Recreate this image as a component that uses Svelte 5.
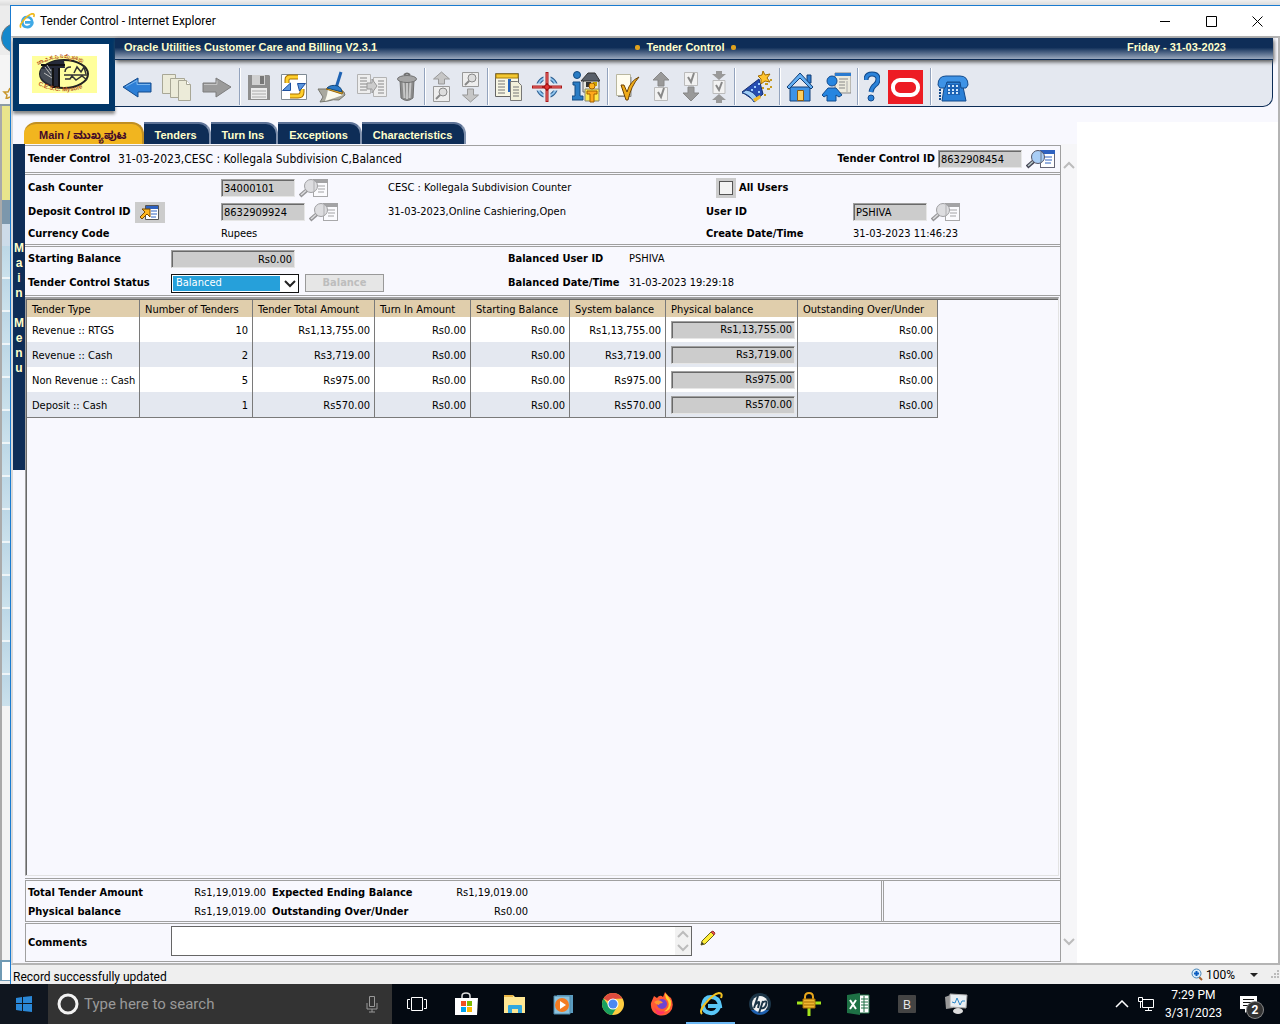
<script>
  const toolbar = [
    { items: [["back", "Back", 30], ["history", "History", 30], ["forward", "Forward", 30]] },
    { items: [["save", "Save", 24], ["refresh", "Refresh", 26], ["clear", "Clear", 30], ["duplicate", "Duplicate", 30], ["delete", "Delete", 20]] },
    { items: [["prev", "Previous item", 19], ["next", "Next item", 19]] },
    { items: [["account", "Account information", 27], ["target", "Go to", 30], ["premise", "Premise information", 28]] },
    { items: [["todo", "To do", 26], ["todoprev", "Previous to do", 20], ["todonext", "Next to do", 20], ["todoboth", "Current to do", 16]] },
    { tight: true, items: [["wizard", "Scripts", 32]] },
    { tight: true, items: [["home", "Home", 28], ["user", "My preferences", 29]] },
    { tight: true, items: [["help", "Help", 16], ["oracle", "About", 36]] },
    { tight: true, items: [["phone", "Call", 32]] }
  ];

  const tabs = ["Main / ಮುಖ್ಯಪುಟ", "Tenders", "Turn Ins", "Exceptions", "Characteristics"];
  let activetab = tabs[0];

  const columns = [
    { name: "Tender Type", width: 113 },
    { name: "Number of Tenders", width: 113 },
    { name: "Tender Total Amount", width: 122 },
    { name: "Turn In Amount", width: 96 },
    { name: "Starting Balance", width: 99 },
    { name: "System balance", width: 96 },
    { name: "Physical balance", width: 132 },
    { name: "Outstanding Over/Under", width: 140 }
  ];

  const tenders = [
    { type: "Revenue :: RTGS", count: 10, total: "Rs1,13,755.00" },
    { type: "Revenue :: Cash", count: 2, total: "Rs3,719.00" },
    { type: "Non Revenue :: Cash", count: 5, total: "Rs975.00" },
    { type: "Deposit :: Cash", count: 1, total: "Rs570.00" }
  ];

  const apps = ["taskview", "store", "folder", "media", "chrome", "firefox", "ie", "hp", "lock", "excel", "b", "monitor"];

  let status = "Balanced";
  let comments = "";
</script>

{#snippet lookup(off)}
  <svg class:off width="29" height="20" viewBox="0 0 29 20">
    <rect x="14.500" y="1.500" width="14" height="17" fill="#fff" stroke="#667" />
    <path d="M14 1h15v4H14z" fill="#2f62c0" />
    <path d="M19 8h7M19 11h7M19 14h6" stroke="#2f62c0" />
    <path d="M8 12l-7 6" stroke="#445" stroke-width="4" />
    <path d="M7 12.500l-5 4.500" stroke="#bcc" stroke-width="1.500" />
    <circle cx="12" cy="8" r="6.500" fill="#a9cdf5" stroke="#556" />
    <path d="M15 3v11" stroke="#678" />
  </svg>
{/snippet}

{#snippet icon(name, width)}
  <svg {width} height="34" viewBox="0 0 {width} 34">
    {#if name === "back"}
      <path d="M1 17L16 8v5h13v9H16v5z" fill="#2e7fd6" stroke="#124a8c" />
      <path d="M4 16.500l11-6v4h13" fill="none" stroke="#7bb6ee" />
    {:else if name === "forward"}
      <path d="M29 17L14 8v5H1v9h13v5z" fill="#9b9b9b" stroke="#7d7d7d" />
      <path d="M2 14.500h13v-4" fill="none" stroke="#c4c4c4" />
    {:else if name === "history"}
      <g fill="#ecebd9" stroke="#a8a796">
        <path d="M.5 4.500h13v19H.5z" /><path d="M8.500 8.500h14v19h-14z" />
        <path d="M16.500 10.500h8l4 4v16h-12z" /><path d="M24.500 10.500v4h4" fill="#fff" />
      </g>
    {:else if name === "save"}
      <path d="M1 5h21l1 1v24H1z" fill="#8e8e8e" />
      <path d="M5 5h13v10H5z" fill="#d0d0d0" /><path d="M13 6h4v8h-4z" fill="#777" />
      <path d="M4 18h16v11H4z" fill="#ececec" /><path d="M5 21h14M5 24h14M5 27h14" stroke="#aaa" />
    {:else if name === "refresh"}
      <path d="M.5 4.500h25v25H.5z" fill="#fff" stroke="#7e8a94" />
      <path d="M6 13V10q0-3 3-3h8" fill="none" stroke="#a87000" stroke-width="5" />
      <path d="M6 13V10q0-3 3-3h8" fill="none" stroke="#ffd02c" stroke-width="3" />
      <path d="M21 19v3q0 4-4 4H9" fill="none" stroke="#a87000" stroke-width="5" />
      <path d="M21 19v3q0 4-4 4H9" fill="none" stroke="#ffd02c" stroke-width="3" />
      <path d="M1.500 20.500l8-7.500v7.500zM16.500 13.500h8l-6 7.500z" fill="#5b97de" stroke="#1d4f9e" />
    {:else if name === "clear"}
      <path d="M24 2l-5 16" stroke="#1e63b4" stroke-width="3" />
      <path d="M1 19h9l17 3 1 3-6 5q-6-1-11 1l-8 1 3-5z" fill="#a9a99f" stroke="#77776e" />
      <path d="M11 19l15 6q-8 3-18 6l2-6z" fill="#fbfbef" />
      <path d="M9 19l16 5 1-3-14-4z" fill="#f3b32b" stroke="#9a6b11" />
      <path d="M10 18q4-4 11-2 4 2 4 6z" fill="#2b7ac9" stroke="#154b80" />
    {:else if name === "duplicate"}
      <path d="M.5 4.500h13v19H.5zM16.500 7.500h13v19h-13z" fill="#eee" stroke="#b3b3b3" />
      <path d="M3 8h7M3 11h7M3 14h7M3 17h7M3 20h7M21 11h6M21 14h6M21 17h6M21 20h6M21 23h6" stroke="#888" />
      <path d="M10 13h5V9l5 7-5 7v-4h-5z" fill="#ccc" stroke="#999" />
    {:else if name === "delete"}
      <path d="M3 10h14l-1 18q-6 5-12 0z" fill="#8c8c8c" stroke="#707070" />
      <path d="M6.500 12l1 16M10 12v17M13.500 12l-1 16" stroke="#c6c6c6" stroke-width="2" />
      <ellipse cx="10" cy="9" rx="9.500" ry="3.500" fill="#a5a5a5" stroke="#707070" />
      <path d="M7 5q3-3 6 0" fill="none" stroke="#707070" stroke-width="2" />
    {:else if name === "prev"}
      <path d="M9.500 2l8 7h-5v5h-6V9h-5z" fill="#c6c6c6" stroke="#999" />
      <path d="M1.500 16.500h16v15h-16z" fill="#eee" stroke="#999" />
      <circle cx="11" cy="22" r="4" fill="#ddd" stroke="#888" /><path d="M8 25l-4 4" stroke="#888" stroke-width="2" />
    {:else if name === "next"}
      <path d="M1.500 2.500h16v14h-16z" fill="#eee" stroke="#999" />
      <circle cx="11" cy="8" r="4" fill="#ddd" stroke="#888" /><path d="M8 11l-4 4" stroke="#888" stroke-width="2" />
      <path d="M9.500 32l8-7h-5v-6h-6v6h-5z" fill="#c6c6c6" stroke="#999" />
    {:else if name === "account"}
      <path d="M.5 3.500h23v23H.5z" fill="#f7f6e4" stroke="#666" />
      <path d="M1 4h22v4H1z" fill="#f3c832" stroke="#a97f0a" />
      <path d="M3 11h7M3 14h7M3 17h7M3 20h7M3 23h7" stroke="#777" />
      <path d="M13 9h3v13h-3z" fill="#2264c0" />
      <path d="M15.500 11.500h7l4 4v15h-11z" fill="#f2f0dc" stroke="#777" />
      <path d="M18 17h6M18 20h6M18 23h6M18 26h6" stroke="#777" />
    {:else if name === "target"}
      <circle cx="15" cy="17" r="9" fill="none" stroke="#2c5f92" stroke-width="4" />
      <circle cx="15" cy="17" r="9" fill="none" stroke="#8fc4ee" stroke-width="2" />
      <path d="M15 1v32M0 17h30" stroke="#e4e8f0" stroke-width="7" />
      <path d="M15 2v30M0 17h30" stroke="#a81818" stroke-width="3" />
      <path d="M15 3v10M15 21v10M1 17h9M20 17h9" stroke="#f57878" />
      <circle cx="15" cy="17" r="2.500" fill="#e63232" stroke="#911" />
    {:else if name === "premise"}
      <circle cx="5" cy="5" r="3.500" fill="#2a7cc4" stroke="#154b80" />
      <path d="M1 12h7v14h3v4H0v-4h3V15H1z" fill="#2a7cc4" stroke="#154b80" />
      <path d="M11 12v10h16V12l-4-4h-8z" fill="#e6e6de" stroke="#666" />
      <path d="M9 11l7-8h7l5 8z" fill="#59606a" stroke="#333" />
      <path d="M14 12h5v5h-5z" fill="#333" /><path d="M21 12h4v4h-4z" fill="#c9a400" />
      <path d="M13 19h14v12H13z" fill="#ffe94a" stroke="#887" />
      <circle cx="20" cy="16" r="3" fill="#ffb41f" stroke="#a06000" />
      <path d="M15 21h10v3h-3v8h-4v-8h-3z" fill="#ffa81c" stroke="#a06000" />
    {:else if name === "todo"}
      <path d="M1.500 4.500h14v21h-14z" fill="#fffdf0" stroke="#b9b7a0" />
      <path d="M3 26.500h13V7" fill="none" stroke="#888" />
      <path d="M6 15h3l3 7Q15 11 24 7 16 16 13 30H11z" fill="#f0ab17" stroke="#6c4306" />
    {:else if name === "todoprev"}
      <path d="M10 2l8 8h-5v6H7v-6H2z" fill="#999" stroke="#888" />
      <path d="M3.500 17.500h13v13h-13z" fill="#f2f2f2" stroke="#bbb" />
      <path d="M7 22l3 5 3-9" fill="none" stroke="#888" stroke-width="2" />
    {:else if name === "todonext"}
      <path d="M3.500 2.500h13v13h-13z" fill="#f2f2f2" stroke="#bbb" />
      <path d="M7 7l3 5 3-9" fill="none" stroke="#888" stroke-width="2" />
      <path d="M10 31l8-8h-5v-6H7v6H2z" fill="#999" stroke="#888" />
    {:else if name === "todoboth"}
      <path d="M5 1h6v3h4l-7 6-7-6h4zM5 33h6v-3h4l-7-6-7 6h4z" fill="#999" />
      <path d="M2 10.500h12v13H2z" fill="#f2f2f2" stroke="#bbb" />
      <path d="M5 15l3 5 3-8" fill="none" stroke="#888" stroke-width="2" />
    {:else if name === "wizard"}
      <path d="M18 9l4 15-8 7-13-9z" fill="#264db2" stroke="#152f70" />
      <path d="M1 23q7 1 12 9l4-3Q13 21 5 20z" fill="#9fcdf5" stroke="#1d3f83" />
      <path d="M12 29l7-4 1 3-6 4z" fill="#f1ba2a" />
      <path d="M13 17h2M17 22h2M10 20h2M17 14h2" stroke="#9ed0ff" stroke-width="2" />
      <path d="M22 1l2 4 5-1-3 4 3 4-5-1-4 3v-5l-3-3 4-1z" fill="#ffc42e" stroke="#a26d00" />
      <path d="M24 14h3M29 10h2M26 19h3M23 25h2M29 17h2M21 18h2" stroke="#c79a20" stroke-width="2" />
    {:else if name === "home"}
      <path d="M21 5h4v8h-4z" fill="#2b7bd0" stroke="#123f77" />
      <path d="M4 17h20v14H4z" fill="#3e93e6" stroke="#123f77" />
      <path d="M14 3L1 17l2 2L14 8l11 11 2-2z" fill="#63aef2" stroke="#123f77" />
      <path d="M11.500 20.500h6v10h-6z" fill="#ffcf5c" stroke="#8c5a0c" />
    {:else if name === "user"}
      <path d="M13 3h16v20H13z" fill="#eceade" stroke="#888" />
      <path d="M13 3h16v3H13z" fill="#2b7bd0" />
      <path d="M17 9h9M17 12h6M17 15h6M17 18h6" stroke="#888" /><path d="M25 11v11" stroke="#aaa" />
      <circle cx="10" cy="11" r="5" fill="#2585e0" stroke="#124a8c" />
      <path d="M0 25l6-7h8l6 7-3 2-3-2v6H5v-6l-3 2z" fill="#2585e0" stroke="#124a8c" />
    {:else if name === "help"}
      <path d="M2 10Q2 4 8 4t6 5q0 4-3 6t-4 7" fill="none" stroke="#124a8c" stroke-width="5" />
      <path d="M2 10Q2 4 8 4t6 5q0 4-3 6t-4 7" fill="none" stroke="#2b82d9" stroke-width="3" />
      <circle cx="7" cy="28" r="3" fill="#2b82d9" stroke="#124a8c" />
    {:else if name === "oracle"}
      <path d="M0 0h35v34H0z" fill="#ed1c24" />
      <rect x="5" y="10" width="25" height="15" rx="7" fill="none" stroke="#fff" stroke-width="4" />
    {:else if name === "phone"}
      <path d="M8 12h17l4 19H5z" fill="#2a7fd6" stroke="#124a8c" />
      <path d="M1 15q0-9 8-9h14q8 0 8 9l-2 3h-5l-1-6H10l-2 6H3z" fill="#3e93e6" stroke="#124a8c" />
      <path d="M10 14h13v11H10z" fill="#1c62b4" />
      <path d="M11 16h11M11 20h11M11 23h11" stroke="#cfe6fb" stroke-width="2" stroke-dasharray="2 2" />
      <path d="M3 19v11" stroke="#124a8c" stroke-dasharray="2 1" stroke-width="2" />
    {/if}
  </svg>
{/snippet}

{#snippet appicon(name)}
  <svg width="24" height="24" viewBox="0 0 24 24">
    {#if name === "taskview"}
      <path d="M6.500 5.500h11v13h-11z" fill="none" stroke="#fff" />
      <path d="M5 7.500H2.500v9H5M19 7.500h2.500v9H19" fill="none" stroke="#fff" />
    {:else if name === "store"}
      <path d="M8 7V4q0-3 4-3t4 3v3" fill="none" stroke="#ddd" stroke-width="1.500" />
      <path d="M1 6h23l-1 17H1z" fill="#fff" />
      <path d="M7 9h5v5H7z" fill="#f25022" /><path d="M13 9h5v5h-5z" fill="#7fba00" />
      <path d="M7 15h5v5H7z" fill="#00a4ef" /><path d="M13 15h5v5h-5z" fill="#ffb900" />
    {:else if name === "folder"}
      <path d="M1 3h9l2 2h10v16H1z" fill="#ffe793" /><path d="M1 3h9v2H1z" fill="#e9b545" />
      <path d="M5 21v-7q0-1 1-1h12q1 0 1 1v7h-4v-4H9v4z" fill="#31a8e0" />
    {:else if name === "media"}
      <path d="M5 3h16v18H5z" fill="#5b9cc0" /><path d="M2 4h16v18H2z" fill="#8cc3de" stroke="#4e89aa" />
      <circle cx="10" cy="13" r="7" fill="#f47b20" /><path d="M8 9l6 4-6 4z" fill="#fff" />
    {:else if name === "chrome"}
      <circle cx="12" cy="12" r="11" fill="#ffcd40" />
      <path d="M12 12L2.500 6.500A11 11 0 0 1 21.500 6.500L12 7z" fill="#dd4b3e" />
      <path d="M2.500 6.500A11 11 0 0 0 11 23l5-8-8-1z" fill="#18a05e" />
      <circle cx="12" cy="12" r="5.500" fill="#fff" /><circle cx="12" cy="12" r="4.500" fill="#4a87f2" />
    {:else if name === "firefox"}
      <path d="M4 4l3 2q3-4 6-1l2-5q3 4 6 6 4 8-1 14-5 5-12 3Q0 20 1 11z" fill="#ff5a35" />
      <path d="M15 1q4 4 6 8 1 10-8 11 8-4 5-11-3-3-3-8z" fill="#ffd42c" />
      <path d="M4 15q5 6 12 4-4 5-9 3z" fill="#ff3366" /><circle cx="12" cy="12" r="5" fill="#7044cf" />
      <path d="M4 10q4-3 7-1l2 2q-4 0-4 2-3 0-5-3z" fill="#ff9630" />
    {:else if name === "ie"}
      <path d="M20 15q-3 7-9 6-7-1-7-8 1-8 8-8 8 0 9 9H9" fill="none" stroke="#59c6f6" stroke-width="4" />
      <path d="M3 22q-3-3 3-10Q14 2 20 1q4 0 2 5" fill="none" stroke="#f3c222" stroke-width="2" />
    {:else if name === "hp"}
      <circle cx="12" cy="12" r="11" fill="#1c3547" /><path d="M3 18a11 11 0 0 0 18 0z" fill="#1e5fae" />
      <circle cx="12" cy="12" r="8" fill="#f4f4f4" />
      <path d="M10 4L6 16M8 12q4-4 3 0l-1 4M15 9l-4 12M14 11q6-4 4 2-1 4-5 3" fill="none" stroke="#1c3547" stroke-width="2" />
    {:else if name === "lock"}
      <path d="M0 11h24M12 16v8" stroke="#a4e41c" stroke-width="3" />
      <path d="M8 7V5q0-4 4-4t4 4v3" fill="none" stroke="#e9a71c" stroke-width="2" />
      <path d="M6 7h12v9H6z" fill="#f0b632" stroke="#a76c00" /><path d="M7 10h10M7 13h10" stroke="#a76c00" />
    {:else if name === "excel"}
      <path d="M12 3h11v18H12z" fill="#fff" stroke="#217346" />
      <path d="M15 7h7M15 10h7M15 13h7M15 16h7M18 4v16" stroke="#217346" />
      <path d="M1 3l13-2v22L1 21z" fill="#1e7145" /><path d="M4 8l6 9M10 8l-6 9" stroke="#fff" stroke-width="2" />
    {:else if name === "b"}
      <rect x="3" y="3" width="18" height="18" rx="1" fill="#444" />
      <text x="8" y="17" fill="#e8e8e8">B</text>
    {:else if name === "monitor"}
      <path d="M1 5l8-3v14l-7 1z" fill="#999" />
      <path d="M6 2l17 1-1 13-16-1z" fill="#e9eef2" stroke="#aaa" />
      <path d="M8 10l3 1 2-5 3 7 2-4h3" fill="none" stroke="#2b87c8" />
      <ellipse cx="14" cy="19" rx="5" ry="3" fill="#ddd" />
    {/if}
  </svg>
{/snippet}

<div class="desktop">
  <div class="screen">
    <div class="behind">
      <div class="backbutton"><svg width="10" height="30" viewBox="0 0 10 30"><circle cx="16" cy="15" r="14.500" fill="#1488cc" stroke="#777" /></svg></div>
      <div class="star"><svg width="10" height="12" viewBox="0 0 10 12"><path d="M10 1L8 5 4 5l3 3-1 4 4-2" fill="none" stroke="#c9972d" stroke-width="1.500" /></svg></div>
      <div class="yellow"></div>
      <div class="steel"></div>
      <div class="pale"></div>
      <div class="rows"></div>
      <div class="blank"></div>
      <div class="foot"></div>
    </div>

    <div class="window">
      <div class="titlebar">
        <svg width="16" height="16" viewBox="0 0 24 24">
          <path d="M20 16q-3 6-9 5-6-1-6-8 1-7 7-7 7 0 8 8H9" fill="none" stroke="#3fa9e6" stroke-width="4" />
          <path d="M3 22q-3-3 3-10Q14 2 20 1q4 0 2 5" fill="none" stroke="#f0b91c" stroke-width="2.500" />
        </svg>
        <span class="caption">Tender Control - Internet Explorer</span>
        <button aria-label="Minimize"><svg width="11" height="11"><path d="M0 5.500h10" stroke="#000" /></svg></button>
        <button aria-label="Maximize"><svg width="11" height="11"><path d="M.5 .5h10v10H.5z" fill="none" stroke="#000" /></svg></button>
        <button aria-label="Close"><svg width="11" height="11"><path d="M.5 .5l10 10M10.500 .5l-10 10" stroke="#000" /></svg></button>
      </div>

      <div class="page">
        <header>
          <div class="logo">
            <svg width="90" height="60" viewBox="0 0 90 60">
              <path d="M0 0h90v60H0z" fill="#fff" /><path d="M13 12h65v37H13z" fill="#ffff9c" />
              <defs>
                <path id="arctop" d="M19 21Q45 6 72 23" /><path id="arcbottom" d="M19 41Q45 54 74 40" />
              </defs>
              <ellipse cx="45" cy="30" rx="24" ry="14" fill="#ffffa0" stroke="#222" stroke-width="2" />
              <path d="M45 16A24 14 0 0 0 34 42.500L41 44V24h5z" fill="#252a3a" />
              <path d="M22 25h11v16q-10-4-12-10z" fill="#444b55" />
              <path d="M22 21h24M34 24v19h6V24" fill="none" stroke="#111" stroke-width="2" />
              <path d="M26 23l6 8M25 29l8 5M28 21l4 6" stroke="#bbb" />
              <path d="M46 28q0-5 6-5M55 29l3-6 4 5 3-5 2 7M45 31h24M46 35h5l2-3 4 4 6-4 5 4" fill="none" stroke="#333" stroke-width="1.500" />
              <text class="arc"><textPath href="#arctop">ಚಾ.ವಿ.ಸ.ನಿ.ನಿ ಮೈಸೂರು</textPath></text>
              <text class="arc"><textPath href="#arcbottom">C.E.S.C. Mysore</textPath></text>
            </svg>
          </div>
          <div class="head">
            <div class="band">
              <span>Oracle Utilities Customer Care and Billing V2.3.1</span>
              <span class="program"><i></i>Tender Control<i></i></span>
              <span class="date">Friday - 31-03-2023</span>
            </div>
            <div class="toolbar">
              {#each toolbar as group}
                <div class="group" class:tight={group.tight}>
                  {#each group.items as [name, label, width]}
                    <button aria-label={label} title={label}>{@render icon(name, width)}</button>
                  {/each}
                </div>
              {/each}
            </div>
          </div>
        </header>

        <div class="body">
          <div class="left">
            <nav class="tabs">
              {#each tabs as tab}
                <button class:active={activetab === tab} onclick={() => (activetab = tab)}>{tab}</button>
              {/each}
            </nav>

            <div class="work">
              <button class="mainmenu" aria-label="Main Menu">
                {#each [..."Main Menu"] as ch}<span>{ch}</span>{/each}
              </button>

              <main>
                <section class="key">
                  <b>Tender Control</b>
                  <span class="info">31-03-2023,CESC : Kollegala Subdivision C,Balanced</span>
                  <label for="tcid">Tender Control ID</label>
                  <input id="tcid" class="w84" value="8632908454" />
                  <button aria-label="Search tender control">{@render lookup(false)}</button>
                </section>

                <section class="details">
                  <label for="counter">Cash Counter</label>
                  <div class="field">
                    <input id="counter" class="w74" value="34000101" readonly />
                    <button aria-label="Search cash counter">{@render lookup(true)}</button>
                  </div>
                  <span>CESC : Kollegala Subdivision Counter</span>
                  <div class="allusers">
                    <span class="box"><input id="all" type="checkbox" /></span>
                    <label for="all">All Users</label>
                  </div>
                  <span></span>

                  <div class="field">
                    <label for="deposit">Deposit Control ID</label>
                    <button class="goto" aria-label="Go to deposit control">
                      <svg width="20" height="17" viewBox="0 0 20 17">
                        <path d="M5.500 1.500h13v14h-13z" fill="#fff" stroke="#555" /><path d="M6 2h12v3H6z" fill="#2f62c0" />
                        <path d="M11 7h6M11 10h6M11 13h5" stroke="#2f62c0" />
                        <path d="M2 5h8v8l-3-3-5 5-2-2 5-5z" fill="#ffb61e" stroke="#7a4a00" />
                      </svg>
                    </button>
                  </div>
                  <div class="field">
                    <input id="deposit" class="w84" value="8632909924" readonly />
                    <button aria-label="Search deposit control">{@render lookup(true)}</button>
                  </div>
                  <span>31-03-2023,Online Cashiering,Open</span>
                  <label for="user">User ID</label>
                  <div class="field">
                    <input id="user" class="w74" value="PSHIVA" readonly />
                    <button aria-label="Search user">{@render lookup(true)}</button>
                  </div>

                  <b>Currency Code</b>
                  <span>Rupees</span>
                  <span></span>
                  <b>Create Date/Time</b>
                  <span>31-03-2023 11:46:23</span>
                </section>

                <section class="balance">
                  <label for="start">Starting Balance</label>
                  <input id="start" class="w124 num" value="Rs0.00" readonly />
                  <b>Balanced User ID</b>
                  <span>PSHIVA</span>
                  <label for="status">Tender Control Status</label>
                  <div class="field">
                    <span class="select">
                      <select id="status" bind:value={status}>
                        <option>Balanced</option>
                        <option>Balancing in Progress</option>
                        <option>Open</option>
                      </select>
                      <svg width="12" height="8" viewBox="0 0 12 8"><path d="M1 1l5 5 5-5" fill="none" stroke="#222" stroke-width="2" /></svg>
                    </span>
                    <button class="action" disabled>Balance</button>
                  </div>
                  <b>Balanced Date/Time</b>
                  <span>31-03-2023 19:29:18</span>
                </section>

                <div class="grid">
                  <table>
                    <colgroup>
                      {#each columns as column}<col style="width: {column.width}px" />{/each}
                    </colgroup>
                    <thead>
                      <tr>
                        {#each columns as column}<th>{column.name}</th>{/each}
                      </tr>
                    </thead>
                    <tbody>
                      {#each tenders as row}
                        <tr>
                          <td class="type">{row.type}</td>
                          <td>{row.count}</td>
                          <td>{row.total}</td>
                          <td>Rs0.00</td>
                          <td>Rs0.00</td>
                          <td>{row.total}</td>
                          <td class="entry"><input class="w124 num" aria-label="Physical balance, {row.type}" value={row.total} readonly /></td>
                          <td>Rs0.00</td>
                        </tr>
                      {/each}
                    </tbody>
                  </table>
                </div>

                <section class="totals">
                  <div class="sums">
                    <b>Total Tender Amount</b><span>Rs1,19,019.00</span>
                    <b>Expected Ending Balance</b><span>Rs1,19,019.00</span>
                    <b>Physical balance</b><span>Rs1,19,019.00</span>
                    <b>Outstanding Over/Under</b><span>Rs0.00</span>
                  </div>
                  <div class="spare"></div>
                </section>

                <section class="comments">
                  <label for="comments">Comments</label>
                  <div class="memo">
                    <textarea id="comments" bind:value={comments}></textarea>
                    <div class="arrows">
                      <svg width="12" height="8" viewBox="0 0 12 8"><path d="M1 7l5-5 5 5" /></svg>
                      <svg width="12" height="8" viewBox="0 0 12 8"><path d="M1 1l5 5 5-5" /></svg>
                    </div>
                  </div>
                  <button aria-label="Edit comments">
                    <svg width="16" height="16" viewBox="0 0 16 16">
                      <path d="M1 15l1-4 9-9 3 3-9 9z" fill="#ffee3a" stroke="#6b6414" />
                      <path d="M11 2l2-1 2 2-1 2z" fill="#ec5448" stroke="#933" /><path d="M1 15l1-3 2 2z" fill="#333" />
                    </svg>
                  </button>
                </section>
              </main>

              <div class="scroll">
                <svg width="12" height="8" viewBox="0 0 12 8"><path d="M1 7l5-5 5 5" /></svg>
                <svg width="12" height="8" viewBox="0 0 12 8"><path d="M1 1l5 5 5-5" /></svg>
              </div>
            </div>
          </div>
          <aside></aside>
        </div>
      </div>

      <footer>
        <span class="message">Record successfully updated</span>
        <button class="zoom">
          <svg width="12" height="13" viewBox="0 0 12 13">
            <path d="M8 9l3 3" stroke="#a5602b" stroke-width="2" /><circle cx="5.500" cy="5.500" r="4.500" fill="#d8ecfb" stroke="#4b87b8" />
            <path d="M5.500 3v5M3 5.500h5" stroke="#0b5cc0" stroke-width="2" />
          </svg>
          100%
          <svg class="caret" width="8" height="4"><path d="M0 0h8L4 4z" fill="#222" /></svg>
        </button>
        <svg class="grip" width="12" height="12"><path d="M9 2h2M6 5h2M9 5h2M3 8h2M6 8h2M9 8h2" stroke="#bbb" stroke-width="2" /></svg>
      </footer>
    </div>
  </div>

  <div class="taskbar">
    <button class="start" aria-label="Start">
      <svg width="16" height="16" viewBox="0 0 16 16"><path d="M0 2l6-1v6H0zM7 1l9-1v7H7zM0 8h6v7l-6-1zM7 8h9v8l-9-1z" fill="#2a88d8" /></svg>
    </button>
    <label class="search">
      <svg width="22" height="22" viewBox="0 0 22 22"><circle cx="11" cy="11" r="9" fill="none" stroke="#f2f2f2" stroke-width="3" /></svg>
      <input type="text" placeholder="Type here to search" aria-label="Search" />
      <svg width="12" height="18" viewBox="0 0 12 18"><path d="M3.500 1.500h5v10h-5zM1 8v6h10V8M6 14v3M3 17h6" fill="none" stroke="#999" /></svg>
    </label>
    {#each apps as app}
      <button class="app" class:active={app === "ie"} aria-label={app}>{@render appicon(app)}</button>
    {/each}
    <div class="tray">
      <svg width="14" height="8" viewBox="0 0 14 8"><path d="M1 7l6-6 6 6" fill="none" stroke="#fff" stroke-width="1.500" /></svg>
      <svg width="18" height="16" viewBox="0 0 18 16"><path d="M5.500 3.500h11v8h-11zM8 14.500h7M11.500 12v2M1.500 1.500h4v4h-4zM3.500 6v6" fill="none" stroke="#fff" /></svg>
      <div class="clock"><span>7:29 PM</span><span>3/31/2023</span></div>
      <button class="notes" aria-label="Notifications">
        <svg width="18" height="17" viewBox="0 0 18 17"><path d="M0 0h17v13H9l-4 4v-4H0z" fill="#fff" /><path d="M3 3.500h11M3 6.500h11M3 9.500h8" stroke="#111" /></svg>
        <span class="badge">2</span>
      </button>
    </div>
  </div>
</div>

<style>
  :global(body) {
    background: #ececec;
  }

  .desktop {
    display: flex;
    flex-direction: column;
    min-height: 100vh;
    font: 11px/14px "DejaVu Sans Condensed", Tahoma, sans-serif;
    color: #000;
  }

  button {
    padding: 0;
    border: none;
    background: none;
    font: inherit;
    color: inherit;
  }

  svg {
    display: block;
    flex: none;
  }

  label,
  b {
    font-weight: bold;
    white-space: nowrap;
  }

  span {
    white-space: nowrap;
  }

  .screen {
    flex: 1;
    display: flex;
    padding-top: 5px;
    background: linear-gradient(#f0f0f0, #dcdcdc 5px, #ececec 6px);
  }

  .behind {
    width: 10px;
    display: flex;
    flex-direction: column;
  }

  .backbutton {
    height: 50px;
    padding-top: 18px;
    box-sizing: border-box;
  }

  .star {
    height: 51px;
    padding-top: 32px;
    box-sizing: border-box;
    border-bottom: 2px solid #8b9ba5;
    background: #f5f5f5;
  }

  .yellow,
  .steel,
  .pale,
  .rows,
  .blank {
    border-left: 2px solid #aaa;
  }

  .yellow {
    height: 94px;
    background: #e9e58c;
  }

  .steel {
    height: 24px;
    background: #7c97ac;
  }

  .pale {
    height: 22px;
    background: #cddbe9;
  }

  .rows {
    height: 460px;
    background: repeating-linear-gradient(#bcd7e6, #cbe1ec 31px, #eef5f8 31px, #eef5f8 33px);
  }

  .blank {
    flex: 1;
    background: #f4f4f4;
  }

  .foot {
    height: 18px;
    margin-bottom: 3px;
    border: solid #6f9ab4;
    border-width: 2px 0 1px 2px;
    background: #fff;
  }

  .window {
    flex: 1;
    min-width: 0;
    display: flex;
    flex-direction: column;
    border-top: 1px solid #1a7bd0;
    border-left: 1px solid #1a7bd0;
    background: #fff;
  }

  .titlebar {
    display: flex;
    align-items: center;
    height: 30px;
    padding-left: 8px;
    font: 12px/16px Roboto, "Noto Sans", sans-serif;
  }

  .caption {
    flex: 1;
    margin-left: 5px;
  }

  .titlebar button {
    display: flex;
    justify-content: center;
    width: 46px;
  }

  .page {
    flex: 1;
    display: flex;
    flex-direction: column;
    border: 2px solid #b4b4b4;
    border-left-color: #d8d8d8;
    background: #f8f8fe;
  }

  header {
    display: flex;
    align-items: flex-start;
    margin-bottom: 11px;
    font: bold 11px/14px "Liberation Sans", Arial, sans-serif;
  }

  .logo {
    padding: 6px 6px 7px;
    background: #013668;
    box-shadow: 0 3px 3px #888;
  }

  .arc {
    font-size: 6px;
    fill: #b5561f;
  }

  .head {
    flex: 1;
    margin-right: 5px;
  }

  .band {
    display: grid;
    grid-template-columns: 1fr auto 1fr;
    height: 22px;
    padding: 2px 26px 0 9px;
    box-sizing: border-box;
    border-bottom: 1px solid #0c2c56;
    background: linear-gradient(#0e2d57 45%, #9aa8bd);
    box-shadow: 1px 2px 4px #555;
    color: #ffffcc;
    position: relative;
  }

  .program {
    display: flex;
    align-items: center;
    align-self: start;
    gap: 6px;
  }

  .program i {
    width: 5px;
    height: 5px;
    border-radius: 2px;
    background: #e0a21e;
  }

  .date {
    text-align: right;
    padding-right: 21px;
  }

  .toolbar {
    display: flex;
    align-items: center;
    height: 47px;
    padding-top: 7px;
    box-sizing: border-box;
    border-right: 1px solid #0c2c56;
    border-bottom: 1px solid #0c2c56;
    border-radius: 0 0 10px 0;
    background: #e4e8f0;
  }

  .group {
    display: flex;
    align-items: center;
    gap: 10px;
    height: 37px;
    padding: 0 7px;
    border-right: 1px solid #93a3bd;
    box-shadow: 1px 0 #fff;
  }

  .group.tight {
    gap: 8px;
    padding: 0 6px;
  }

  .group:last-child {
    border-right: none;
    box-shadow: none;
  }

  .body {
    flex: 1;
    display: flex;
  }

  .left {
    flex: 1;
    display: flex;
    flex-direction: column;
  }

  aside {
    width: 201px;
    background: #fff;
  }

  .tabs {
    display: flex;
    padding: 0 11px;
  }

  .tabs button {
    height: 22px;
    padding: 2px 12px 0 11px;
    border: solid #8091ad;
    border-width: 2px 2px 0 0;
    border-top-color: #5d7296;
    border-radius: 0 12px 0 0;
    background: #0e2d57;
    color: #ffffcc;
    font: bold 11px/14px "Liberation Sans", Arial, "Noto Sans Kannada", sans-serif;
    white-space: nowrap;
  }

  .tabs button.active {
    padding-left: 15px;
    padding-right: 15px;
    border-color: #c08f24;
    border-radius: 12px 12px 0 0;
    background: #f1b51f;
    color: #430a2a;
  }

  .work {
    flex: 1;
    display: flex;
  }

  .mainmenu {
    display: flex;
    flex-direction: column;
    align-items: center;
    width: 12px;
    height: 326px;
    padding-top: 97px;
    box-sizing: border-box;
    background: #0e2d57;
    color: #ffffcc;
    font: bold 12px/15px "Liberation Sans", Arial, sans-serif;
  }

  .mainmenu span {
    height: 15px;
  }

  main {
    flex: 1;
    display: flex;
    flex-direction: column;
    margin: 1px 0;
    border-top: 1px solid #a0a0a0;
    border-right: 1px solid #a0a0a0;
    border-bottom: 1px solid #a0a0a0;
  }

  section {
    padding-left: 3px;
    border-bottom: 3px double #a0a0a0;
  }

  input,
  textarea,
  select {
    margin: 0;
    box-sizing: border-box;
    font: inherit;
    color: #000;
    border-radius: 0;
  }

  main input:not([type]) {
    height: 18px;
    padding: 0 2px;
    border: 1px solid;
    border-color: #a0a0a0 #e6e6e6 #e6e6e6 #a0a0a0;
    background: #ccc;
    box-shadow: inset 1px 1px #696969;
  }

  main input.num {
    text-align: right;
  }

  .w74 {
    width: 74px;
  }

  .w84 {
    width: 84px;
  }

  .w124 {
    width: 124px;
  }

  .field {
    display: flex;
    align-items: center;
    gap: 4px;
  }

  .off {
    filter: grayscale(1);
    opacity: 0.55;
  }

  .key {
    display: flex;
    align-items: center;
    height: 26px;
  }

  .key .info {
    flex: 1;
    margin-left: 8px;
    font-size: 12px;
  }

  .key input {
    margin: 0 4px 0 3px;
  }

  .key button {
    margin-right: 5px;
  }

  .details {
    display: grid;
    grid-template-columns: 193px 167px 318px 147px 1fr;
    grid-template-rows: 24px 24px 20px;
    align-items: center;
    padding-top: 1px;
  }

  .allusers {
    display: flex;
    align-items: center;
    gap: 3px;
    margin-left: 10px;
  }

  .box {
    display: flex;
    padding: 3px;
    background: #ccc;
  }

  .box input {
    appearance: none;
    width: 14px;
    height: 14px;
    border: 1px solid #555;
    background: #f3f3f3;
  }

  .goto {
    padding: 2px 5px;
    background: #ccc;
  }

  .balance {
    display: grid;
    grid-template-columns: 143px 337px 121px 1fr;
    grid-template-rows: 24px 24px;
    align-items: center;
    margin-bottom: 1px;
    border-bottom: 1px solid #a0a0a0;
  }

  .select {
    display: flex;
    position: relative;
    margin-right: 2px;
  }

  .select svg {
    position: absolute;
    right: 3px;
    top: 6px;
    pointer-events: none;
  }

  select {
    appearance: none;
    width: 128px;
    height: 19px;
    padding: 1px 18px 1px 1px;
    border: 1px solid #111;
    background: linear-gradient(#26a0da, #26a0da) content-box, #fff;
    color: #fff;
    text-indent: 3px;
  }

  .action {
    width: 79px;
    height: 18px;
    border: 1px solid #999;
    background: #e6e6e6;
    color: #bdbdbd;
    font-weight: bold;
  }

  .grid {
    flex: 1;
    margin: 0 1px 2px 0;
    padding: 1px 0 0 1px;
    border: solid #a0a0a0;
    border-width: 2px 1px 1px;
    border-right-color: #e3e3e3;
    border-bottom-color: #e3e3e3;
    box-shadow: inset 1px 1px #696969;
  }

  table {
    table-layout: fixed;
    width: 1px;
    border-collapse: separate;
    border-spacing: 0;
    border-bottom: 1px solid #7a7a7a;
  }

  th,
  td {
    box-sizing: border-box;
    padding: 2px 4px 0 5px;
    border-right: 1px solid #7a7a7a;
    text-align: right;
    white-space: nowrap;
  }

  th {
    height: 17px;
    background: #e0ceac;
    font-weight: normal;
    text-align: left;
  }

  td {
    height: 25px;
    background: #fff;
  }

  td.type {
    padding-right: 0;
    text-align: left;
  }

  td.entry {
    padding-top: 0;
    padding-right: 2px;
  }

  td input {
    display: block;
  }

  tbody tr:nth-child(even) td {
    background: #e4e8f0;
  }

  .totals {
    display: flex;
    padding-left: 0;
    border-top: 3px double #a0a0a0;
  }

  .sums {
    flex: 1;
    display: grid;
    grid-template-columns: 142px 96px 163px 99px;
    grid-template-rows: 19px 19px;
    align-items: center;
    padding: 2px 0 0 2px;
    border-left: 1px solid #a0a0a0;
  }

  .sums span {
    text-align: right;
  }

  .sums span + b {
    padding-left: 6px;
  }

  .sums span:nth-of-type(2) + b {
    padding-left: 0;
  }

  .spare {
    width: 17%;
    border-left: 3px double #a0a0a0;
  }

  .comments {
    display: flex;
    height: 37px;
    padding-left: 2px;
    border-bottom: none;
    border-left: 1px solid #a0a0a0;
  }

  .comments label {
    width: 143px;
    line-height: 37px;
  }

  .memo {
    display: flex;
    width: 521px;
    height: 30px;
    margin-top: 2px;
    box-sizing: border-box;
    border: 1px solid #666;
    background: #fff;
  }

  textarea {
    flex: 1;
    border: none;
    resize: none;
    outline: none;
  }

  .arrows {
    display: flex;
    flex-direction: column;
    justify-content: space-between;
    width: 16px;
    padding: 3px 0;
    align-items: center;
    background: #f2f2f2;
  }

  .arrows path,
  .scroll path {
    fill: none;
    stroke: #bcbcbc;
    stroke-width: 2;
  }

  .comments button {
    align-self: flex-start;
    margin: 6px 0 0 8px;
  }

  .scroll {
    display: flex;
    flex-direction: column;
    align-items: center;
    justify-content: space-between;
    width: 16px;
    padding: 17px 0;
    box-sizing: border-box;
    background: #f6f6f8;
  }

  footer {
    display: flex;
    align-items: center;
    height: 19px;
    padding-left: 2px;
    background: #efefef;
    font: 12px/16px Roboto, "Noto Sans", sans-serif;
  }

  .message {
    flex: 1;
    padding-top: 4px;
  }

  .zoom {
    display: flex;
    align-items: center;
    gap: 3px;
  }

  .caret {
    margin-left: 12px;
  }

  .grip {
    margin-left: 10px;
  }

  .taskbar {
    display: flex;
    height: 40px;
    background: #040a12;
    font: 12px/18px Roboto, "Noto Sans", sans-serif;
    color: #fff;
  }

  .start {
    display: flex;
    align-items: center;
    justify-content: center;
    width: 48px;
    background: #10161f;
  }

  .search {
    display: flex;
    align-items: center;
    width: 344px;
    padding: 0 14px 0 9px;
    box-sizing: border-box;
    background: #333;
  }

  .search input {
    flex: 1;
    min-width: 0;
    padding: 0 5px;
    border: none;
    background: none;
    font-size: 15px;
    font-weight: normal;
    color: #fff;
  }

  .search input::placeholder {
    color: #999;
    opacity: 1;
  }

  .app {
    display: flex;
    align-items: center;
    justify-content: center;
    width: 49px;
  }

  .app.active {
    box-shadow: inset 0 -2px #6cb8f4;
  }

  .app text {
    font: 12px "Liberation Sans", sans-serif;
  }

  .tray {
    display: flex;
    align-items: center;
    gap: 8px;
    margin-left: auto;
    padding-right: 22px;
  }

  .clock {
    display: flex;
    flex-direction: column;
    align-items: center;
    margin: 0 10px 0 2px;
  }

  .notes {
    position: relative;
  }

  .badge {
    position: absolute;
    left: 7px;
    top: 6px;
    width: 16px;
    height: 16px;
    border-radius: 8px;
    background: #333;
    box-shadow: 0 0 0 1px #888;
    font-weight: bold;
    line-height: 16px;
    text-align: center;
  }
</style>
